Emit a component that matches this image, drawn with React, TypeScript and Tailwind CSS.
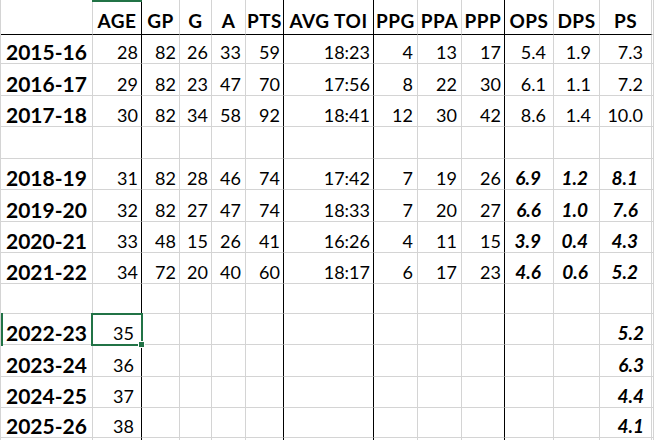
import React from 'react';

// one column per spreadsheet column A..N, widths measured off the sheet
const TEMPLATE =
  'grid grid-cols-[92px_49px_38px_32px_34px_38px_90px_44px_44px_43px_49px_46px_52px_1fr]';

const LINES = [
  'border-r-[#d4d4d4]',
  'border-r-black',
  'border-r-[#d4d4d4]',
  'border-r-[#d4d4d4]',
  'border-r-[#d4d4d4]',
  'border-r-black',
  'border-r-black',
  'border-r-[#d4d4d4]',
  'border-r-[#d4d4d4]',
  'border-r-black',
  'border-r-[#d4d4d4]',
  'border-r-[#d4d4d4]',
  'border-r-[#d4d4d4]',
  'border-r-[#d4d4d4]',
];

const PADS = [
  'pl-[5px] justify-start',
  'pr-[3px]',
  'pr-[3px]',
  'pr-[3px]',
  'pr-[4px]',
  'pr-[3px]',
  'pr-[3px]',
  'pr-[4px]',
  'pr-[4px]',
  'pr-[3px]',
  'pr-[7px]',
  'pr-[8px]',
  'pr-[8px]',
  '',
];

const HEADERS = ['', 'AGE', 'GP', 'G', 'A', 'PTS', 'AVG TOI', 'PPG', 'PPA', 'PPP', 'OPS', 'DPS', 'PS', ''];

type Kind = 'past' | 'proj' | 'future' | 'blank';
type Season = { h: string; kind: Kind; season?: string; vals?: string[] };

const SEASONS: Season[] = [
  { h: 'h-[29px]', kind: 'past', season: '2015-16', vals: ['28', '82', '26', '33', '59', '18:23', '4', '13', '17', '5.4', '1.9', '7.3'] },
  { h: 'h-[32px]', kind: 'past', season: '2016-17', vals: ['29', '82', '23', '47', '70', '17:56', '8', '22', '30', '6.1', '1.1', '7.2'] },
  { h: 'h-[31px]', kind: 'past', season: '2017-18', vals: ['30', '82', '34', '58', '92', '18:41', '12', '30', '42', '8.6', '1.4', '10.0'] },
  { h: 'h-[32px]', kind: 'blank' },
  { h: 'h-[31px]', kind: 'proj', season: '2018-19', vals: ['31', '82', '28', '46', '74', '17:42', '7', '19', '26', '6.9', '1.2', '8.1'] },
  { h: 'h-[32px]', kind: 'proj', season: '2019-20', vals: ['32', '82', '27', '47', '74', '18:33', '7', '20', '27', '6.6', '1.0', '7.6'] },
  { h: 'h-[31px]', kind: 'proj', season: '2020-21', vals: ['33', '48', '15', '26', '41', '16:26', '4', '11', '15', '3.9', '0.4', '4.3'] },
  { h: 'h-[31px]', kind: 'proj', season: '2021-22', vals: ['34', '72', '20', '40', '60', '18:17', '6', '17', '23', '4.6', '0.6', '5.2'] },
  { h: 'h-[30px]', kind: 'blank' },
  { h: 'h-[31px]', kind: 'future', season: '2022-23', vals: ['35', '', '', '', '', '', '', '', '', '', '', '5.2'] },
  { h: 'h-[32px]', kind: 'future', season: '2023-24', vals: ['36', '', '', '', '', '', '', '', '', '', '', '6.3'] },
  { h: 'h-[31px]', kind: 'future', season: '2024-25', vals: ['37', '', '', '', '', '', '', '', '', '', '', '4.4'] },
  { h: 'h-[30px]', kind: 'future', season: '2025-26', vals: ['38', '', '', '', '', '', '', '', '', '', '', '4.1'] },
  { h: 'h-[31px]', kind: 'blank' },
];

const ITALIC_PADS: Record<number, string> = { 10: 'pr-[12px]', 11: 'pr-[11px]', 12: 'pr-[13px]' };

function HeaderRow() {
  return (
    <div className={`${TEMPLATE} h-[35px]`}>
      {HEADERS.map((label, i) => (
        <div
          key={i}
          className={`relative flex items-end justify-center pb-[4px] border-r border-b whitespace-nowrap text-[19px] tracking-[0.5px] leading-none font-bold ${LINES[i]} ${i === 13 ? 'border-b-[#d4d4d4]' : 'border-b-black'}`}
        >
          {i === 1 && <span className="absolute -left-px top-0 w-[50px] h-[2px] bg-[#217346]" />}
          {label}
        </div>
      ))}
    </div>
  );
}

function SeasonRow({ row, selected }: { row: Season; selected: boolean }) {
  const cells = row.kind === 'blank' ? Array(14).fill('') : [row.season!, ...row.vals!, ''];
  return (
    <div className={`${TEMPLATE} ${row.h}`}>
      {cells.map((v: string, i: number) => {
        let style = 'text-[18px] font-normal pb-[2px]';
        let pad = PADS[i];
        if (i === 0) style = 'text-[21px] font-bold pb-px';
        if (row.kind === 'proj' && i >= 10 && i <= 12) {
          style = 'text-[19px] font-bold italic pb-[2px]';
          pad = ITALIC_PADS[i];
        }
        if (row.kind === 'future') {
          if (i === 1) pad = 'pr-[7px]';
          if (i === 12) {
            style = 'text-[19px] font-bold italic pb-[2px]';
            pad = 'pr-[7px]';
          }
        }
        return (
          <div
            key={i}
            className={`relative flex items-end justify-end leading-none whitespace-nowrap border-r border-b border-b-[#d4d4d4] ${LINES[i]} ${pad} ${style}`}
          >
            {selected && i === 0 && <span className="absolute left-0 -top-px w-[2px] h-[33px] bg-[#217346]" />}
            {selected && i === 1 && (
              <span className="absolute -left-[2px] -top-px w-[52px] h-[33px] border-2 border-[#217346] z-10">
                <span className="absolute right-[-4px] bottom-[-4px] w-[7px] h-[7px] bg-[#217346] border border-white" />
              </span>
            )}
            {v}
          </div>
        );
      })}
    </div>
  );
}

export default function App() {
  return (
    <div className="w-[654px] h-[440px] overflow-hidden bg-white text-black font-['Lato',sans-serif]">
      <div className="border-l border-l-[#d4d4d4]">
        <HeaderRow />
        {SEASONS.map((row, idx) => (
          <SeasonRow key={idx} row={row} selected={row.season === '2022-23'} />
        ))}
      </div>
    </div>
  );
}
